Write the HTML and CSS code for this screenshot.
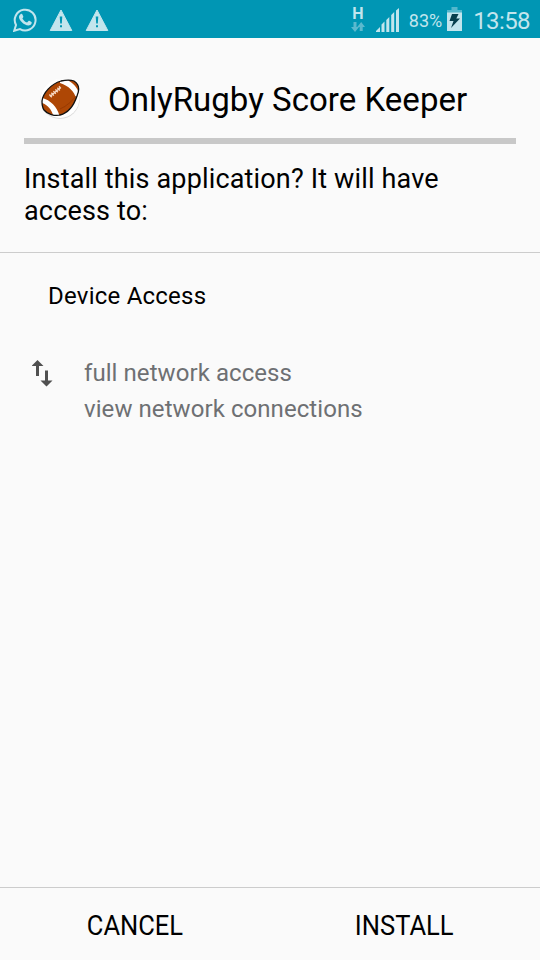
FILE: index.html
```html
<!DOCTYPE html>
<html lang="en">
<head>
<meta charset="utf-8">
<title>Package installer</title>
<link rel="stylesheet" href="styles.css">
</head>
<body>
<div class="status">
  <div class="notifications">
    <svg width="24" height="24" viewBox="0 0 24 24" fill="none"><path d="M1.2 22.8 3 17A10.4 10.4 0 1 1 7 21.1Z" stroke="#c2e5ed" stroke-width="2"/><path fill="#c2e5ed" d="M7.5 6.2C8.3 5.4 9 5.7 9.3 6.3L10.3 8.5C10.5 9.2 9.8 9.9 9.4 10.4 10.5 12.4 12 13.7 14.1 14.5L15.5 13C16 12.6 16.8 13 18.4 14 19.3 14.5 18.4 16.4 17.2 17.1 15.7 17.9 13.9 17.5 11.6 16.3 9.1 15 6.2 11.6 6 9.3 5.9 8 6.6 7 7.5 6.2Z"/></svg>
    <svg class="warning" width="24" height="24" viewBox="0 0 24 24"><path d="M12 2 22.8 22.5H1.2Z" fill="#c2e5ed" stroke="#c2e5ed" stroke-width="1" stroke-linejoin="round"/><path d="M10.7 8.5h2.6l-.5 7h-1.6zM11 17.3h2v2h-2z" fill="#0096b4"/></svg>
    <svg class="warning" width="24" height="24" viewBox="0 0 24 24"><path d="M12 2 22.8 22.5H1.2Z" fill="#c2e5ed" stroke="#c2e5ed" stroke-width="1" stroke-linejoin="round"/><path d="M10.7 8.5h2.6l-.5 7h-1.6zM11 17.3h2v2h-2z" fill="#0096b4"/></svg>
  </div>
  <div class="system">
    <div class="data"><span>H</span><svg width="14" height="10" viewBox="0 0 14 10" fill="#5bb9ce"><path d="M2.5 0h3v5H8L4 10 0 5h2.5zM8.7 9h3V5H14L10.2 0 6.2 5h2.5z"/></svg></div>
    <svg class="signal" width="24" height="24" viewBox="0 0 24 24" fill="#c2e5ed"><path d="M0 24v-1l4-4v5zM5.5 24v-7.5l3-3V24zM10.3 24V12l3-3v15zM15.2 24V7l3-3v20zM20 24V2.5L23 0v24z"/></svg>
    <span class="percent">83%</span>
    <svg class="battery" width="15" height="24" viewBox="0 0 15 24"><path d="M4.5 0h6v3H15v3H0V3h4.5z" fill="#54b7cc"/><path d="M0 5.5h15V24H0z" fill="#c2e5ed"/><path d="M5 7h6.5L9.3 11.5H13L4 21l2.5-7H2.5z" fill="#073f4d"/></svg>
    <span class="time">13:58</span>
  </div>
</div>
<header>
  <div class="app">
    <svg class="ball" width="44" height="44" viewBox="0 0 44 44"><circle cx="22" cy="22.4" r="19.6" fill="#ddd"/><circle cx="22" cy="21.6" r="19.4" fill="#fff"/><clipPath id="ball-shape"><path d="M4 24C5 16 13 7 23 4 28 2.8 33 2.8 36 4 41 7 42 12 39 19 36 28 30 36 22 38 17 39.5 9 37 6 33 4 30 4 28 4 24Z"/></clipPath><g clip-path="url(#ball-shape)"><path fill="#ae4705" d="M0 0h44v44H0z"/><path d="M22 3 28 2C35 6 39 10 41 16L38.5 22C36 14 31 9 22 6Z" fill="#fff"/><path d="M3 20.5C12 23 19 29 21.5 39H15.5C13 32 10 28 4 26Z" fill="#fff"/><path d="M22 32C29 29 34 24 38 19" fill="none" stroke="#8f3500" stroke-width=".7"/></g><path d="M36 4C33 2.8 28 2.8 23 4 13 7 5 16 4 24 4 28 4 30 6 33 9 37 17 39.5 22 38 30 36 36 28 39 19 42 12 41 7 36 4Z" fill="none" stroke="#111" stroke-width="1.3"/><path d="m12 19.5 10-8.5M11.4 17.5l2.4 2.8M13.4 15.8l2.4 2.8M15.4 14.1l2.4 2.8M17.4 12.4l2.4 2.8M19.4 10.7l2.4 2.8M21 9.3l1.8 2.2" stroke="#f7d9c5" stroke-width="1.4"/></svg>
    <h1>OnlyRugby Score Keeper</h1>
  </div>
  <p>Install this application? It will have access to:</p>
</header>
<main>
  <h2>Device Access</h2>
  <div class="permission">
    <svg width="22" height="28" viewBox="0 0 22 28" fill="#505050"><path d="M5.5 0 11.5 6H7V16H4V6H-.5zM13 10.5h3V20.5h4.5l-6 6-6-6H13z"/></svg>
    <ul><li>full network access</li><li>view network connections</li></ul>
  </div>
</main>
<footer><button><span>CANCEL</span></button><button><span>INSTALL</span></button></footer>
</body>
</html>
```

FILE: styles.css
```css
* { box-sizing: border-box; }
body { margin: 0; height: 960px; display: flex; flex-direction: column; background: #fafafa; color: #000; font-family: Roboto, sans-serif; }
h1, h2, p, ul { margin: 0; padding: 0; font-weight: 400; }
svg { display: block; flex: none; }
.status { height: 38px; background: #0096b4; color: #c2e5ed; display: flex; justify-content: space-between; padding: 0 10px 0 13.4px; }
.notifications { display: flex; padding-top: 8px; gap: 12px; }
.system { display: flex; align-items: flex-start; }
.data { width: 14px; margin: 7px 11px 0 0; font-size: 16px; line-height: 14px; font-weight: 700; text-align: center; }
.data span { display: block; height: 15px; }
.signal { margin: 8px 9px 0 0; }
.percent { font-size: 18px; line-height: 42px; margin-right: 5px; }
.battery { margin-top: 7px; }
.time { font-size: 24px; line-height: 42px; margin-left: 11px; letter-spacing: -.6px; }
header { height: 215px; padding: 0 24px; border-bottom: 1px solid #ccc; }
.app { height: 106px; padding: 38px 0 0 14px; border-bottom: 6px solid #c8c8c8; display: flex; }
.app h1 { font-size: 33px; line-height: 48px; margin-left: 26px; letter-spacing: .03px; white-space: nowrap; }
.ball { margin-top: 1px; }
header p { font-size: 27px; line-height: 32px; padding-top: 19px; letter-spacing: .16px; }
main { flex: 1; }
h2 { font-size: 24px; line-height: 28px; padding: 29px 0 0 48px; letter-spacing: .23px; }
.permission { display: flex; padding: 45px 0 0 32px; }
.permission svg { margin-top: 5px; }
.permission ul { list-style: none; margin-left: 30px; font-size: 24px; line-height: 36px; letter-spacing: .07px; color: #6e7073; }
footer { height: 73px; border-top: 1px solid #ccc; display: grid; grid-template-columns: 1fr 1fr; }
button { border: 0; background: none; padding: 4px 1px 0 0; font: 27px/32px Roboto, sans-serif; color: #000; }
button span { display: inline-block; transform: scaleX(.945); }
```
